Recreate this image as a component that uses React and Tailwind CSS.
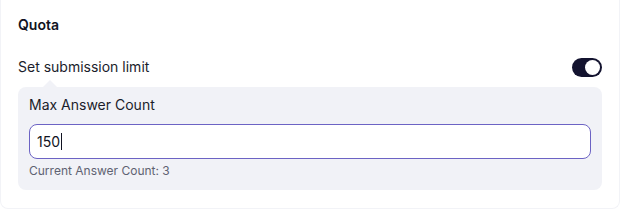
export default function App() {
  return (
    <div className="w-[620px] h-[210px] bg-white" style={{ fontFamily: 'Inter, "Noto Sans", sans-serif' }}>
      <div className="h-[209px] rounded-b-lg border-b border-x border-[#f2f3f7] px-[17px] pt-[15px]">
        <h2 className="text-sm leading-5 font-semibold text-[#111322]">Quota</h2>

        <div className="mt-[22px] flex items-center justify-between">
          <span className="text-sm leading-5 text-[#1b1d2b]">Set submission limit</span>
          <button className="w-[30px] h-[19px] rounded-full bg-[#13132f] flex items-center justify-end px-[2px]">
            <span className="w-[15px] h-[15px] rounded-full bg-white" />
          </button>
        </div>

        {/* panel with pointer */}
        <div className="relative mt-[10px] rounded-lg bg-[#f1f2f7] px-[11px] pt-[8px] pb-[11px]">
          <div className="absolute -top-[7px] left-[24px] w-0 h-0 border-l-[8px] border-r-[8px] border-b-[8px] border-l-transparent border-r-transparent border-b-[#f1f2f7]" />
          <label className="block text-sm leading-5 text-[#1b1d2b]">Max Answer Count</label>
          <div className="mt-[9px] h-[35px] rounded-lg border border-[#6c63c4] bg-white flex items-center px-[7px]">
            <span className="text-sm text-[#111322]">150</span>
            <span className="w-px h-[17px] bg-[#111322] ml-px" />
          </div>
          <p className="mt-[4px] text-xs leading-4 text-[#5f6272]">Current Answer Count: 3</p>
        </div>
      </div>
    </div>
  )
}
